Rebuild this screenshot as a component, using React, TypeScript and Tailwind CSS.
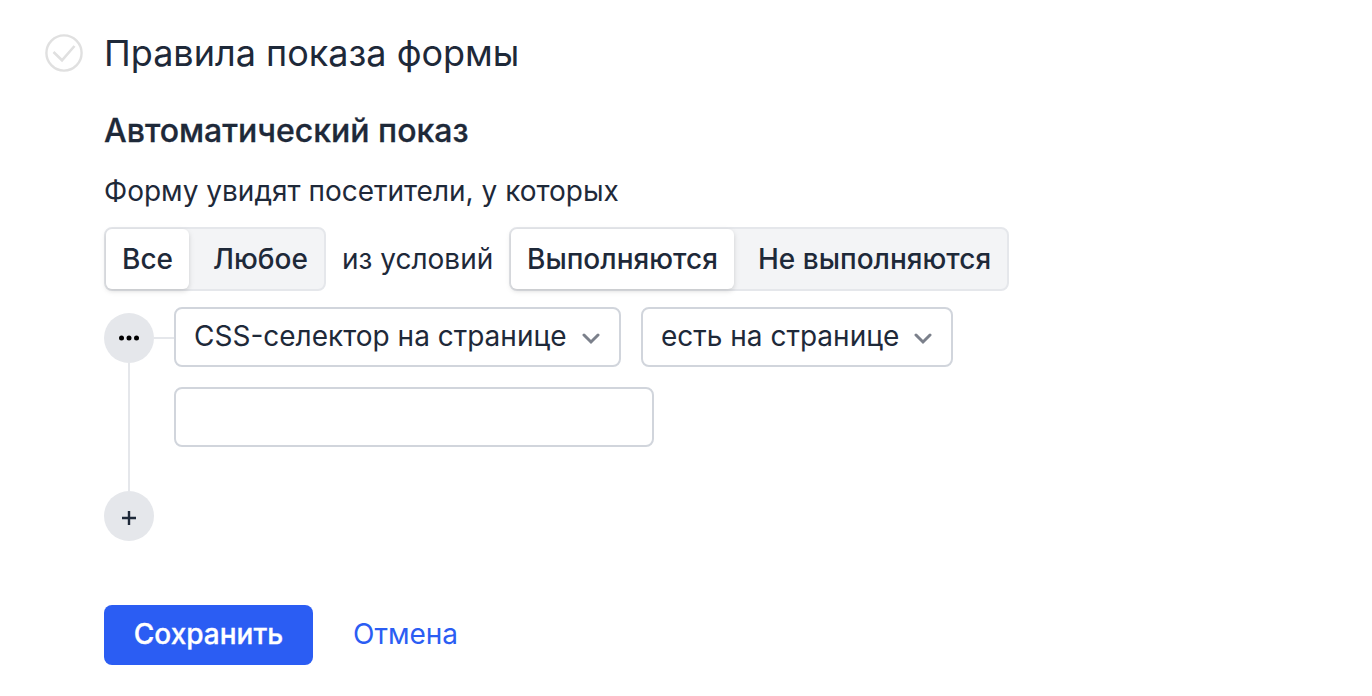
import { useState } from "react";

function Segmented({ options, className }: { options: { label: string; className: string }[]; className: string }) {
  const [active, setActive] = useState(0);
  return (
    <div className={`flex h-16 rounded-lg border-2 border-gray-200 bg-gray-100 ${className}`}>
      {options.map((o, i) => (
        <button
          key={o.label}
          onClick={() => setActive(i)}
          className={`h-[60px] rounded-md text-left font-medium whitespace-nowrap ${o.className} ${
            i === active ? "bg-white shadow-[0_2px_6px_rgba(0,0,0,0.1),0_2px_4px_rgba(0,0,0,0.06)]" : ""
          }`}
        >
          {o.label}
        </button>
      ))}
    </div>
  );
}

function Select({ label, className }: { label: string; className: string }) {
  return (
    <button className={`flex h-[60px] items-center justify-between rounded-lg border-2 border-gray-300 bg-white pr-[19px] pl-[18px] whitespace-nowrap ${className}`}>
      <span className="-mt-0.5">{label}</span>
      <svg width="18" height="12" viewBox="0 0 18 12" fill="none" className="mt-[3px]">
        <path d="M2 2l7 7 7-7" stroke="#7b808b" strokeWidth="3" strokeLinecap="round" />
      </svg>
    </button>
  );
}

export default function App() {
  return (
    <main className="flex h-[696px] w-[1372px] overflow-hidden bg-white pl-[45px] font-['Inter',sans-serif] text-[28px] leading-10 text-gray-800">
      <div className="w-[59px] shrink-0 pt-[34px]">
        <svg width="38" height="38" viewBox="0 0 38 38" fill="none" stroke="#e0e0e0">
          <circle cx="19" cy="19" r="17.6" strokeWidth="2.4" />
          <path d="M8.5 18l8.5 8.3L29.5 12" strokeWidth="2.6" />
        </svg>
      </div>
      <div className="pt-[29px]">
        <h1 className="h-12 text-4xl leading-12">Правила показа формы</h1>
        <h2 className="mt-[34px] h-10 text-[32px] font-medium [-webkit-text-stroke:0.3px]">Автоматический показ</h2>
        <p className="mt-5 h-10">Форму увидят посетители, у которых</p>
        <div className="mt-4 flex items-center">
          <Segmented
            className="w-[222px]"
            options={[
              { label: "Все", className: "w-[83px] pl-4" },
              { label: "Любое", className: "w-[135px] pl-6" },
            ]}
          />
          <span className="w-[183px] pl-4 whitespace-nowrap">из условий</span>
          <Segmented
            className="w-[500px]"
            options={[
              { label: "Выполняются", className: "w-[223px] pl-4" },
              { label: "Не выполняются", className: "w-[273px] pl-6" },
            ]}
          />
        </div>
        <div className="mt-4 flex">
          <div className="flex w-[50px] flex-col items-center pt-1.5">
            <button aria-label="Меню условия" className="flex size-[50px] items-center justify-center rounded-full bg-gray-200">
              <svg width="22" height="6" viewBox="0 0 22 6" fill="#000">
                <circle cx="3.5" cy="3" r="2.5" />
                <circle cx="11" cy="3" r="2.5" />
                <circle cx="18.5" cy="3" r="2.5" />
              </svg>
            </button>
            <div className="h-32 w-0.5 bg-gray-200" />
            <button aria-label="Добавить условие" className="flex size-[50px] items-center justify-center rounded-full bg-gray-200">
              <svg width="14" height="14" viewBox="0 0 14 14" stroke="#1e2939" strokeWidth="2.4" className="mt-1">
                <path d="M0 7h14M7 0v14" />
              </svg>
            </button>
          </div>
          <div className="mt-[30px] h-0.5 w-5 bg-gray-200" />
          <div>
            <div className="flex gap-5">
              <Select label="CSS-селектор на странице" className="w-[447px]" />
              <Select label="есть на странице" className="w-[312px]" />
            </div>
            <input className="mt-5 block h-[60px] w-[480px] rounded-lg border-2 border-gray-300 bg-white px-[18px] outline-none" />
          </div>
        </div>
        <div className="mt-16 flex items-center">
          <button className="h-[60px] w-[209px] rounded-lg bg-[#2b5df3] pb-0.5 font-medium text-white [-webkit-text-stroke:0.3px]">Сохранить</button>
          <button className="ml-10 pb-0.5 text-[#2b5df3]">Отмена</button>
        </div>
      </div>
    </main>
  );
}
